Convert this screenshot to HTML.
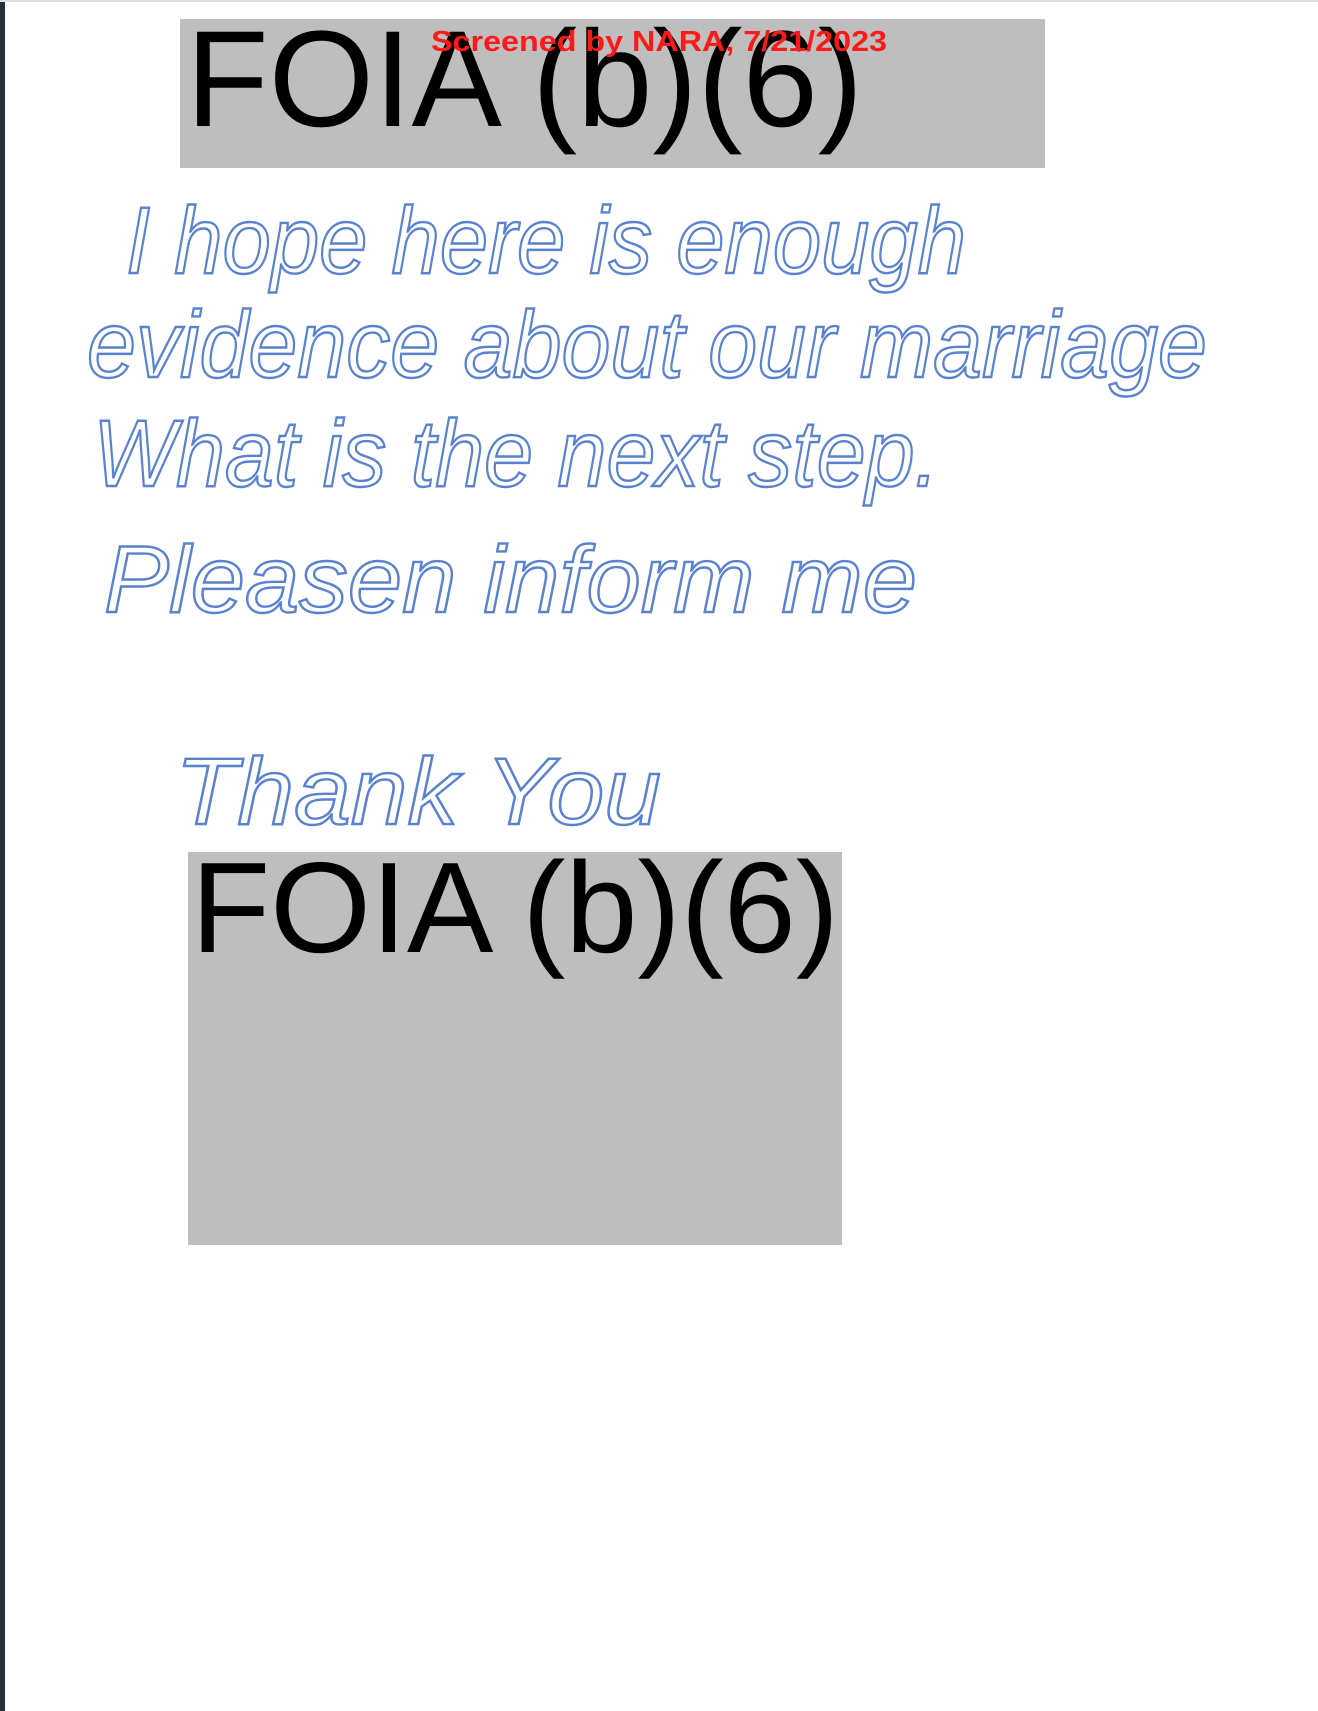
<!DOCTYPE html>
<html><head><meta charset="utf-8"><style>
html,body{margin:0;padding:0;background:#fff;}
body{width:1318px;height:1711px;position:relative;overflow:hidden;}
</style></head><body>
<div style="position:absolute;left:0;top:0;width:5px;height:1711px;background:#2a2e36"></div>
<div style="position:absolute;left:0;top:0;width:1318px;height:2px;background:#ddd"></div>
<svg width="1318" height="1711" style="position:absolute;left:0;top:0" xmlns="http://www.w3.org/2000/svg">
<rect x="180" y="19" width="865" height="149" fill="#bebebe"/>
<rect x="188" y="852" width="654" height="393" fill="#bebebe"/>
<text x="186" y="126" font-family="Liberation Sans, sans-serif" font-size="137" fill="#000" textLength="677" lengthAdjust="spacingAndGlyphs">FOIA (b)(6)</text>
<text x="191" y="952" font-family="Liberation Sans, sans-serif" font-size="129" fill="#000" textLength="648" lengthAdjust="spacingAndGlyphs">FOIA (b)(6)</text>
<text x="431" y="51" font-family="Liberation Sans, sans-serif" font-size="29" font-weight="bold" fill="#ff1a1a" textLength="456" lengthAdjust="spacingAndGlyphs">Screened by NARA, 7/21/2023</text>
<g font-family="Liberation Sans, sans-serif" font-style="italic" fill="none" stroke="#5b82cf" stroke-width="2.4">
<text x="126" y="273" font-size="95" textLength="840" lengthAdjust="spacingAndGlyphs">I hope here is enough</text>
<text x="87" y="377" font-size="95" textLength="1120" lengthAdjust="spacingAndGlyphs">evidence about our marriage</text>
<text x="93" y="486" font-size="95" textLength="846" lengthAdjust="spacingAndGlyphs">What is the next step.</text>
<text x="104" y="612" font-size="95" textLength="813" lengthAdjust="spacingAndGlyphs">Pleasen inform me</text>
<text x="175" y="824" font-size="95" textLength="486" lengthAdjust="spacingAndGlyphs">Thank You</text>
</g>
</svg>
</body></html>
